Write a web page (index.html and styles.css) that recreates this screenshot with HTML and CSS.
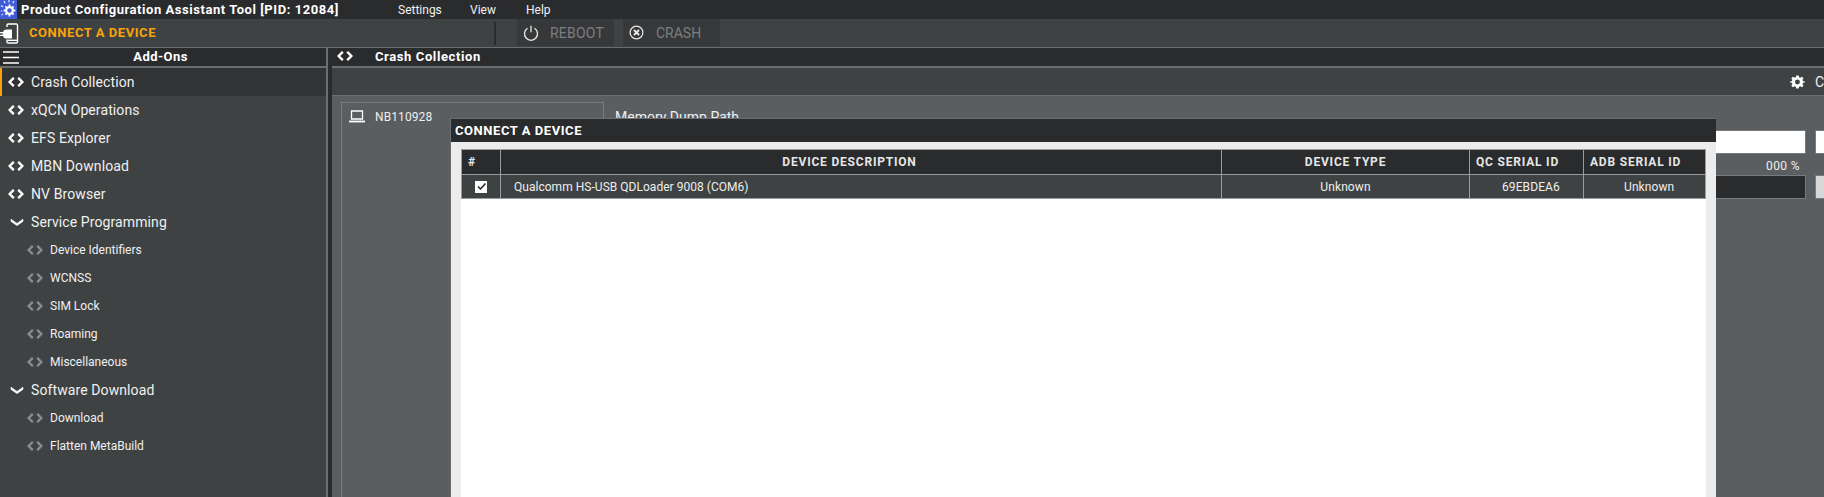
FILE: index.html
```html
<!DOCTYPE html>
<html lang="en">
<head>
<meta charset="utf-8">
<title>Product Configuration Assistant Tool</title>
<link rel="stylesheet" href="styles.css">
</head>
<body>
<svg class="defs" width="0" height="0" aria-hidden="true">
  <symbol id="code" viewBox="0 0 16 10">
    <path d="M5.800 .8 1.600 5l4.200 4.200M10.200 .8 14.400 5l-4.200 4.200" fill="none" stroke="currentColor" stroke-width="2.400"/>
  </symbol>
  <symbol id="chev" viewBox="0 0 14 8">
    <path d="M1 1.200 7 5.400l6-4.200V3.400L7 7.600 1 3.400z" fill="currentColor" stroke="currentColor" stroke-width=".6"/>
  </symbol>
</svg>
<div class="app">
  <header class="titlebar">
    <div class="logo">
      <svg viewBox="0 0 17 19" width="17" height="19">
        <rect width="17" height="19" fill="#3f5bd8"/>
        <circle cx="9.500" cy="10.500" r="3.400" fill="none" stroke="#fff" stroke-width="2.200"/>
        <path d="M9.500 4.600v2M9.500 14.400v2M3.600 10.500h2M13.400 10.500h2M5.400 6.400l1.400 1.400M12.200 13.200l1.400 1.400M5.400 14.600l1.400-1.400M12.200 7.800l1.400-1.400" stroke="#fff" stroke-width="1.800"/>
        <path d="M1 5.500 3 7M4 1l1.200 2.200M9 0v2.500M14 1l-1.200 2.200M1 11h1.400M1.500 15l1.400-.8" stroke="#dfe5ff" stroke-width="1.200"/>
      </svg>
    </div>
    <div class="app-title">Product Configuration Assistant Tool [PID: 12084]</div>
    <nav class="menu">
      <span class="menu-settings">Settings</span>
      <span class="menu-view">View</span>
      <span>Help</span>
    </nav>
  </header>

  <div class="toolbar">
    <div class="connect">
      <svg viewBox="0 0 19 24" width="19" height="24">
        <path d="M7 6V4.200Q7 3 8.200 3h8.200q1.100 0 1.100 1.200v16.600q0 1.200-1.100 1.200H8.200Q7 22 7 20.800V18.500" fill="none" stroke="#fff" stroke-width="1.400"/>
        <path d="M7.500 19.300h10" stroke="#fff" stroke-width="1.400"/>
        <path d="M6 8.500h6v9H6q-2.500 0-3-2.500H0v-1.200h2.700v-1.600H0v-1.200h3Q3.500 8.500 6 8.500z" fill="#fff"/>
      </svg>
      <span class="connect-label">CONNECT A DEVICE</span>
    </div>
    <div class="sep"></div>
    <div class="tool-btn reboot">
      <svg viewBox="0 0 16 16" width="16" height="16">
        <path d="M4.500 3.300a6.500 6.500 0 1 0 7 0M8 .8v6.500" fill="none" stroke="#e8e8e8" stroke-width="1.300"/>
      </svg>
      <span>REBOOT</span>
    </div>
    <div class="tool-btn crash">
      <svg viewBox="0 0 16 16" width="15" height="15">
        <circle cx="8" cy="8" r="6.800" fill="none" stroke="#e8e8e8" stroke-width="1.300"/>
        <path d="m5.300 5.300 5.400 5.400m0-5.400-5.400 5.400" stroke="#e8e8e8" stroke-width="2"/>
      </svg>
      <span>CRASH</span>
    </div>
  </div>

  <div class="main">
    <aside class="sidebar">
      <div class="panel-head addons-head">
        <svg class="burger" viewBox="0 0 16 13" width="16" height="13">
          <path d="M0 1h16M0 6.500h16M0 12h16" stroke="#fff" stroke-width="1.500"/>
        </svg>
        <span>Add-Ons</span>
      </div>
      <ul class="nav">
        <li class="item active"><svg class="ic-code"><use href="#code"/></svg>Crash Collection</li>
        <li class="item"><svg class="ic-code"><use href="#code"/></svg>xQCN Operations</li>
        <li class="item"><svg class="ic-code"><use href="#code"/></svg>EFS Explorer</li>
        <li class="item"><svg class="ic-code"><use href="#code"/></svg>MBN Download</li>
        <li class="item"><svg class="ic-code"><use href="#code"/></svg>NV Browser</li>
        <li class="item"><svg class="ic-chev"><use href="#chev"/></svg>Service Programming</li>
        <li class="item sub"><svg class="ic-code"><use href="#code"/></svg>Device Identifiers</li>
        <li class="item sub"><svg class="ic-code"><use href="#code"/></svg>WCNSS</li>
        <li class="item sub"><svg class="ic-code"><use href="#code"/></svg>SIM Lock</li>
        <li class="item sub"><svg class="ic-code"><use href="#code"/></svg>Roaming</li>
        <li class="item sub"><svg class="ic-code"><use href="#code"/></svg>Miscellaneous</li>
        <li class="item"><svg class="ic-chev"><use href="#chev"/></svg>Software Download</li>
        <li class="item sub"><svg class="ic-code"><use href="#code"/></svg>Download</li>
        <li class="item sub"><svg class="ic-code"><use href="#code"/></svg>Flatten MetaBuild</li>
      </ul>
    </aside>

    <section class="workspace">
      <div class="panel-head crash-head">
        <svg class="ic-code head-code"><use href="#code"/></svg>
        <span>Crash Collection</span>
      </div>
      <div class="subbar">
        <svg viewBox="-1 -1 18 18" width="16" height="16">
          <path d="M6.500 0h3l.4 2.200 1.600.7L13.400 1.600l2 2-1.300 1.900.7 1.600L17 7.500v1l-2.200.4-.7 1.600 1.300 1.900-2 2-1.900-1.300-1.600.7L9.500 16h-3l-.4-2.200-1.600-.7-1.900 1.300-2-2 1.300-1.900-.7-1.600L-1 8.500v-1l2.200-.4.7-1.600-1.300-1.900 2-2 1.900 1.300 1.600-.7zM8 5a3 3 0 1 0 0 6 3 3 0 0 0 0-6z" fill="#fff" fill-rule="evenodd"/>
        </svg>
        <span>C</span>
      </div>
      <div class="content">
        <div class="devices">
          <svg viewBox="0 0 16 13" width="16" height="13">
            <path d="M2.500 1h11v8h-11z" fill="none" stroke="#fff" stroke-width="1.300"/>
            <path d="M0 10.600h16V12.400H0z" fill="#fff"/>
          </svg>
          <span>NB110928</span>
        </div>
        <div class="form">
          <div class="form-label">Memory Dump Path</div>
          <div class="form-row row-one">
            <div class="field white"></div>
            <div class="field white end"></div>
          </div>
          <div class="percent">000 %</div>
          <div class="form-row">
            <div class="field dark"></div>
            <div class="field grey end"></div>
          </div>
        </div>
      </div>
    </section>
  </div>

  <div class="modal">
    <div class="modal-title">CONNECT A DEVICE</div>
    <div class="modal-body">
      <div class="table">
        <div class="cell th c-num">#</div>
        <div class="cell th c-desc">DEVICE DESCRIPTION</div>
        <div class="cell th center">DEVICE TYPE</div>
        <div class="cell th c-serial">QC SERIAL ID</div>
        <div class="cell th c-serial">ADB SERIAL ID</div>
        <div class="cell td c-num check-cell"><span class="check">
          <svg viewBox="0 0 11 11" width="11" height="11"><path d="M2 5.500 4.500 8 9.500 2.500" fill="none" stroke="#222" stroke-width="1.500"/></svg>
        </span></div>
        <div class="cell td desc-text">Qualcomm HS-USB QDLoader 9008 (COM6)</div>
        <div class="cell td center">Unknown</div>
        <div class="cell td c-qc">69EBDEA6</div>
        <div class="cell td c-adb">Unknown</div>
      </div>
    </div>
  </div>
</div>
</body>
</html>
```
FILE: styles.css
```css
* { box-sizing: border-box; }
html, body { margin: 0; height: 100%; overflow: hidden; }
body { font-family: Roboto, "Liberation Sans", sans-serif; color: #fff; background: #2a2b2d; }
.defs { position: absolute; }
.app { position: relative; width: 1824px; height: 497px; overflow: hidden; display: flex; flex-direction: column; }

.titlebar { height: 19px; flex: none; display: flex; align-items: center; background: #2a2b2d; }
.logo { width: 17px; height: 19px; flex: none; margin-right: 4px; }
.logo svg { display: block; }
.app-title { width: 377px; font-size: 13px; font-weight: 700; letter-spacing: .55px; white-space: nowrap; }
.menu { display: flex; font-size: 12px; color: #f2f2f2; }
.menu-settings { width: 72px; }
.menu-view { width: 56px; }

.toolbar { height: 29px; flex: none; display: flex; align-items: stretch; background: #3f4243; border-bottom: 1px solid #6b6e70; }
.connect { width: 494px; display: flex; align-items: center; }
.connect svg { flex: none; }
.connect-label { margin: 0 0 2px 10px; font-size: 13px; font-weight: 700; letter-spacing: .55px; color: #f9a30a; }
.sep { width: 2px; margin: 3px 21px 2px 0; background: #2a2b2d; }
.tool-btn { width: 97px; margin-bottom: 1px; display: flex; align-items: center; background: #373839; color: #7b7e80; font-size: 14px; }
.reboot { padding-left: 6px; margin-right: 9px; }
.reboot span { margin-left: 11px; letter-spacing: .2px; }
.crash { padding-left: 6px; }
.crash span { margin-left: 12px; }

.main { flex: 1; min-height: 0; display: flex; }
.sidebar { width: 328px; flex: none; background: #3f4243; border-right: 2px solid #6b6e70; box-shadow: 4px 0 0 #2a2b2d; }
.panel-head { height: 20px; padding-bottom: 2px; background: #2a2b2d; border-bottom: 2px solid #6b6e70; font-size: 13px; font-weight: 700; letter-spacing: .6px; display: flex; align-items: center; }
.addons-head { position: relative; justify-content: center; padding-right: 5px; letter-spacing: .45px; }
.burger { position: absolute; left: 3px; top: 3px; }
.nav { list-style: none; margin: 0; padding: 0; }
.item { height: 28px; padding-left: 8px; display: flex; align-items: center; font-size: 14px; color: #f0f0f0; letter-spacing: .1px; }
.item.active { background: #323334; box-shadow: inset 2px 0 0 #f9a30a; }
.item.sub { padding-left: 27px; font-size: 12px; letter-spacing: 0; }
.ic-code { width: 16px; height: 10px; margin-right: 7px; flex: none; color: #fff; }
.sub .ic-code { color: #8a8c8e; }
.ic-chev { width: 14px; height: 8px; margin: 0 7px 0 2px; flex: none; color: #fff; }

.workspace { flex: 1; min-width: 0; margin-left: 4px; display: flex; flex-direction: column; background: #5a5e61; }
.crash-head { padding-left: 5px; }
.head-code { margin-right: 22px; }
.subbar { height: 28px; flex: none; background: #3f4243; border-bottom: 1px solid #6b6e70; display: flex; align-items: center; padding-left: 1458px; font-size: 14px; color: #f0f0f0; }
.subbar span { margin-left: 10px; }
.content { flex: 1; display: flex; padding: 6px 0 0 9px; }
.devices { width: 263px; flex: none; border: 1px solid #777b7e; border-bottom: 0; padding: 7px 0 0 7px; display: flex; align-items: flex-start; font-size: 12px; color: #eee; letter-spacing: .1px; }
.devices span { margin-left: 10px; }
.form { flex: none; width: 1300px; margin-left: 11px; }
.form-label { font-size: 14px; color: #f0f0f0; margin-top: 7px; height: 12px; line-height: 16px; }
.form-row { display: flex; gap: 9px; }
.row-one { margin-top: 9px; }
.field { height: 24px; width: 1191px; border: 1px solid #777b7e; flex: none; }
.field.end { width: 60px; }
.white { background: #fff; }
.dark { background: #2a2b2d; }
.grey { background: #d8d8d8; }
.percent { width: 1185px; height: 21px; padding-top: 5px; text-align: right; font-size: 12px; color: #eee; letter-spacing: .4px; }

.modal { position: absolute; left: 450px; top: 118px; width: 1266px; height: 400px; background: #ececec; border-top: 1px solid #6b6e70; border-left: 1px solid #6b6e70; display: flex; flex-direction: column; }
.modal-title { height: 23px; flex: none; background: #2a2b2d; padding-left: 4px; font-size: 13px; font-weight: 700; letter-spacing: .55px; display: flex; align-items: center; }
.modal-body { flex: 1; margin: 7px 10px 0; background: #fff; }
.table { display: grid; grid-template-columns: 38px 721px 248px 114px 122px; grid-template-rows: 25px 23px; border: 1px solid #9a9c9e; }
.cell { display: flex; align-items: center; border-left: 1px solid #9a9c9e; font-size: 12px; }
.c-num { border-left: 0; }
.th { background: #2a2b2d; font-weight: 700; letter-spacing: .8px; color: #e6e6e6; border-bottom: 1px solid #9a9c9e; }
.td { background: #3f4243; color: #eee; letter-spacing: .1px; }
.center { justify-content: center; }
.c-num.th { padding-left: 6px; }
.c-desc { justify-content: center; padding-right: 23px; }
.c-serial { padding-left: 6px; }
.check-cell { justify-content: center; }
.check { width: 12px; height: 12px; background: #fff; display: block; }
.check svg { display: block; margin: .5px; }
.desc-text { padding-left: 13px; letter-spacing: .03px; }
.c-qc { padding-left: 32px; }
.c-adb { padding-left: 40px; }
```
